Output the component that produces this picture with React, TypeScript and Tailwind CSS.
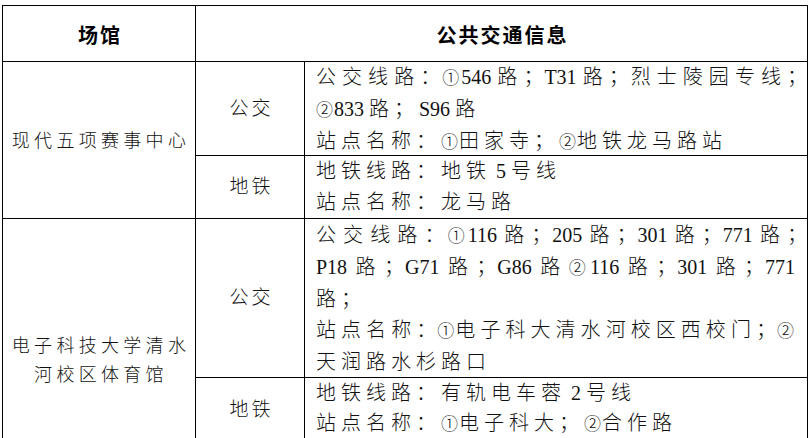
import React from "react";

const IDEO = /[\u4e00-\u9fff]/;
const PUNCT = /[\u3000-\u303f\uff00-\uffef]/;
const CIRC = /[\u2460-\u2473]/;

function Rich({ text, tight }: { text: string; tight: boolean }) {
  const parts =
    text.match(
      /[\u4e00-\u9fff]+|[\u3000-\u303f\uff00-\uffef]+|[\u2460-\u2473]|[^\u2460-\u2473\u3000-\u303f\u4e00-\u9fff\uff00-\uffef]+/g
    ) || [];
  return (
    <>
      {parts.map((p, i) => {
        if (CIRC.test(p))
          return (
            <span key={i} className="text-[17px] tracking-[1px]">
              {p}
            </span>
          );
        if (IDEO.test(p))
          return (
            <span key={i} className="tracking-[5px]">
              {p}
            </span>
          );
        if (PUNCT.test(p))
          return (
            <span key={i} className={tight ? "tracking-[1px]" : "tracking-[5px]"}>
              {p}
            </span>
          );
        return <span key={i}>{p}</span>;
      })}
    </>
  );
}

function Line({ text, justify = false }: { text: string; justify?: boolean }) {
  const hang = justify && text.endsWith("；");
  const body = hang ? text.slice(0, -1) : text;
  return (
    <div
      className={
        justify
          ? "whitespace-nowrap text-justify [text-align-last:justify]"
          : "whitespace-nowrap text-left"
      }
    >
      <Rich text={body} tight={justify} />
      {hang && <span className="-mr-[12px]">；</span>}
    </div>
  );
}

function Info({ lines, className }: { lines: [string, boolean][]; className: string }) {
  return (
    <div className={className}>
      {lines.map(([t, j], i) => (
        <Line key={i} text={t} justify={j} />
      ))}
    </div>
  );
}

export default function App() {
  return (
    <div className="h-[438px] w-[811px] overflow-hidden bg-white pl-[2px] pt-[5px] text-[#111] font-['Liberation_Serif','Noto_Sans_CJK_SC',serif] font-light">
      <div className="w-[806px] border border-black">
        {/* header */}
        <div className="flex h-[56px] border-b border-black font-['Noto_Sans_CJK_SC',sans-serif] text-[20px] font-bold text-black">
          <div className="flex w-[193px] shrink-0 items-center justify-center border-r border-black pt-[2px] pl-[2px] tracking-[2px]">
            场馆
          </div>
          <div className="flex min-w-0 flex-1 items-center justify-center pt-[2px] pl-[2px] tracking-[2px]">
            公共交通信息
          </div>
        </div>

        {/* row 1 */}
        <div className="flex h-[157px] border-b border-black">
          <div className="flex w-[193px] shrink-0 items-center justify-center border-r border-black pt-[3px] pl-[4px] text-center text-[18px] leading-[29px] tracking-[4.3px]">
            现代五项赛事中心
          </div>
          <div className="flex min-w-0 flex-1 flex-col">
            <div className="flex h-[94px] border-b border-black">
              <div className="flex w-[109px] shrink-0 items-center justify-center border-r border-black pl-[3px] pt-[2px] text-[19px] tracking-[3px]">
                公交
              </div>
              <Info
                className="min-w-0 flex-1 pl-[11px] pr-[12px] text-[20px] leading-[31px]"
                lines={[
                  ["公交线路：①546 路；T31 路；烈士陵园专线；", true],
                  ["②833 路；S96 路", false],
                  ["站点名称：①田家寺；②地铁龙马路站", false],
                ]}
              />
            </div>
            <div className="flex h-[62px]">
              <div className="flex w-[109px] shrink-0 items-center justify-center border-r border-black pl-[3px] pt-[1px] text-[19px] tracking-[3px]">
                地铁
              </div>
              <Info
                className="min-w-0 flex-1 pl-[11px] pr-[12px] text-[20px] leading-[31px]"
                lines={[
                  ["地铁线路：地铁 5 号线", false],
                  ["站点名称：龙马路", false],
                ]}
              />
            </div>
          </div>
        </div>

        {/* row 2 */}
        <div className="flex h-[223px] border-b border-black">
          <div className="flex w-[193px] shrink-0 items-center justify-center border-r border-black pt-[62px] pl-[4px] text-center text-[18px] leading-[29px] tracking-[4.3px]">
            <div>
              电子科技大学清水
              <br />
              河校区体育馆
            </div>
          </div>
          <div className="flex min-w-0 flex-1 flex-col">
            <div className="flex h-[159px] border-b border-black">
              <div className="flex w-[109px] shrink-0 items-center justify-center border-r border-black pl-[3px] pt-[1px] text-[19px] tracking-[3px]">
                公交
              </div>
              <Info
                className="min-w-0 flex-1 pl-[11px] pr-[12px] pt-[1px] text-[20px] leading-[31px]"
                lines={[
                  ["公交线路：①116 路；205 路；301 路；771 路；", true],
                  ["P18 路；G71 路；G86 路②116 路；301 路；771", true],
                  ["路；", false],
                  ["站点名称：①电子科大清水河校区西校门；②", true],
                  ["天润路水杉路口", false],
                ]}
              />
            </div>
            <div className="flex h-[63px]">
              <div className="flex w-[109px] shrink-0 items-center justify-center border-r border-black pl-[3px] pt-[1px] text-[19px] tracking-[3px]">
                地铁
              </div>
              <Info
                className="min-w-0 flex-1 pl-[11px] pr-[12px] text-[20px] leading-[30px]"
                lines={[
                  ["地铁线路：有轨电车蓉 2 号线", false],
                  ["站点名称：①电子科大；②合作路", false],
                ]}
              />
            </div>
          </div>
        </div>
      </div>
    </div>
  );
}
